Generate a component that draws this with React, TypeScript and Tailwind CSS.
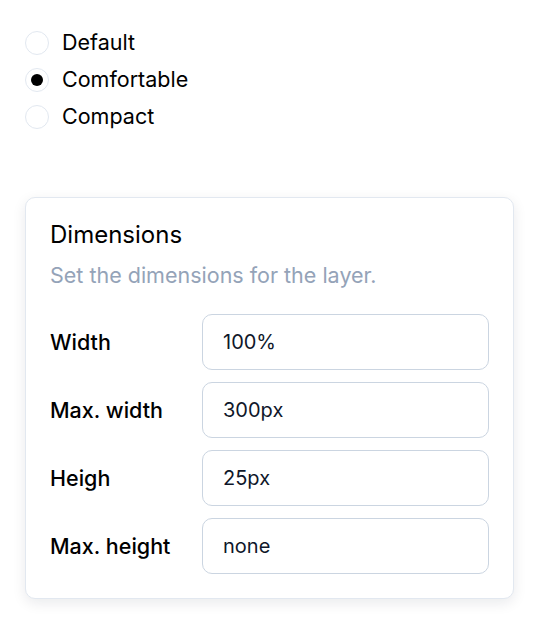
import React, { useState } from "react";

const options = ["Default", "Comfortable", "Compact"];
const fields = [
  { label: "Width", value: "100%" },
  { label: "Max. width", value: "300px" },
  { label: "Heigh", value: "25px" },
  { label: "Max. height", value: "none" },
];

export default function App() {
  const [selected, setSelected] = useState("Comfortable");
  return (
    <div
      className="min-h-[636px] w-[536px] bg-white pl-[25px] pt-[31px]"
      style={{ fontFamily: "Inter, 'Noto Sans', sans-serif" }}
    >
      <div className="flex flex-col gap-[13px]">
        {options.map((o) => (
          <label key={o} className="flex h-6 items-center gap-[13px] cursor-pointer" onClick={() => setSelected(o)}>
            <span className="flex h-6 w-6 items-center justify-center rounded-full border border-[#e2e8f0] bg-white">
              {selected === o && <span className="h-3 w-3 rounded-full bg-black" />}
            </span>
            <span className="text-[21.5px] leading-none text-black">{o}</span>
          </label>
        ))}
      </div>

      <div className="mt-[68px] w-[489px] rounded-[10px] border border-[#e2e8f0] bg-white p-6 shadow-[0_4px_14px_rgba(15,23,42,0.09)]">
        <h2 className="pt-px text-[24px] leading-none font-normal text-black">Dimensions</h2>
        <p className="mt-[14px] text-[21.5px] leading-[28px] text-[#94a3b8]">Set the dimensions for the layer.</p>
        <div className="mt-[25px] flex flex-col gap-3">
          {fields.map((f) => (
            <div key={f.label} className="flex items-center">
              <span className="w-[152px] shrink-0 text-[21.5px] font-medium text-black">{f.label}</span>
              <input
                defaultValue={f.value}
                className="h-14 w-[287px] rounded-[10px] border border-[#cbd5e1] bg-white px-5 text-[20px] text-[#0f172a] outline-none"
              />
            </div>
          ))}
        </div>
      </div>
    </div>
  );
}
